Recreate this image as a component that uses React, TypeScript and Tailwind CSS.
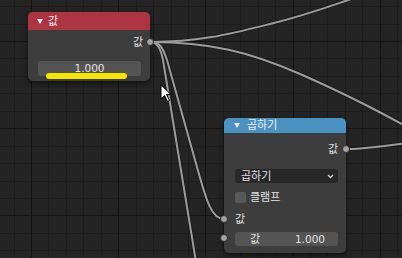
import React from "react";

const SP = 17.44;
const xs = Array.from({ length: 24 }, (_, n) => ({ v: Math.round(13.56 + SP * n), major: (n - 1) % 5 === 0 }));
const ys = Array.from({ length: 16 }, (_, n) => ({ v: Math.round(6.12 + SP * n), major: n % 5 === 2 }));

function Grid() {
  return (
    <svg className="absolute inset-0" width="402" height="258">
      <rect width="402" height="258" fill="#242424" />
      {xs.filter((l) => !l.major).map((l) => (
        <rect key={"x" + l.v} x={l.v} y={0} width={1} height={258} fill="#1c1c1c" />
      ))}
      {ys.filter((l) => !l.major).map((l) => (
        <rect key={"y" + l.v} x={0} y={l.v} width={402} height={1} fill="#1c1c1c" />
      ))}
      {xs.filter((l) => l.major).map((l) => (
        <rect key={"X" + l.v} x={l.v} y={0} width={1} height={258} fill="#141414" />
      ))}
      {ys.filter((l) => l.major).map((l) => (
        <rect key={"Y" + l.v} x={0} y={l.v} width={402} height={1} fill="#141414" />
      ))}
    </svg>
  );
}

const wires = [
  "M150,42 C200,42 230,34 270,24 S330,6 360,-4",
  "M150,42 C210,42 250,52 300,74 S380,112 420,134",
  "M150,42 C158,42 161,50 163,60 L196,262",
  "M150,42 C162,42 163,50 167,60 L195,160 C205,195 210,219 224,219",
  "M346,149 C370,149 385,145 410,143",
];

function Wires() {
  return (
    <svg className="absolute inset-0" width="402" height="258" fill="none">
      {wires.map((d, i) => (
        <path key={"o" + i} d={d} stroke="#141414" strokeOpacity="0.6" strokeWidth="3.6" />
      ))}
      {wires.map((d, i) => (
        <path key={"w" + i} d={d} stroke="#9c9c9c" strokeWidth="2" />
      ))}
    </svg>
  );
}

function Tri() {
  return (
    <svg width="6" height="5" viewBox="0 0 6 5">
      <path d="M0,0 L6,0 L3,5 Z" fill="#eaeaea" />
    </svg>
  );
}

function Socket({ cls }: { cls: string }) {
  return <div className={"absolute w-[8px] h-[8px] rounded-full bg-[#a3a3a3] border border-[#2b2b2b] " + cls} />;
}

export default function App() {
  const font = { fontFamily: '"DejaVu Sans", "Noto Sans CJK KR", sans-serif' };
  return (
    <div className="relative w-[402px] h-[258px] overflow-hidden bg-[#242424] text-[11px] text-[#e2e2e2]" style={font}>
      <Grid />
      <Wires />

      {/* Value node */}
      <div className="absolute left-[28px] top-[12px] w-[122px] rounded-[5px] bg-[#3d3d3d] shadow-[0_2px_5px_rgba(0,0,0,0.55)]">
        <div className="h-[18px] rounded-t-[5px] bg-[#ad3441] flex items-center pl-[9px] gap-[5px] text-[#eeeeee]">
          <Tri />
          <span className="leading-none">값</span>
        </div>
        <div className="pl-[10px] pr-[9px] pt-[3px] pb-[5px] flex flex-col">
          <div className="h-[18px] flex items-center justify-end mr-[-2px]">
            <span className="leading-none">값</span>
          </div>
          <div className="relative mt-[10px] h-[15px] rounded-[3px] bg-[#545454] flex items-center justify-center">
            <span className="leading-none text-[10.5px] text-[#e4e4e4]">1.000</span>
            <div className="absolute left-[8px] top-[12px] w-[81px] h-[6px] rounded-full bg-[#f5e500]" />
          </div>
        </div>
        <Socket cls="right-[-4px] top-[26px]" />
      </div>

      {/* Multiply node */}
      <div className="absolute left-[224px] top-[118px] w-[122px] rounded-[5px] bg-[#3d3d3d] shadow-[0_2px_5px_rgba(0,0,0,0.55)]">
        <div className="h-[15px] rounded-t-[5px] bg-[#4a92c2] flex items-center pl-[10px] gap-[7px] text-[#eeeeee]">
          <Tri />
          <span className="leading-none">곱하기</span>
        </div>
        <div className="pl-[11px] pr-[8px] pt-[7px] pb-[7px] flex flex-col">
          <div className="h-[18px] flex items-center justify-end">
            <span className="leading-none">값</span>
          </div>
          <div className="mt-[11px] h-[14px] rounded-[3px] bg-[#282828] flex items-center justify-between pl-[6px] pr-[4px]">
            <span className="leading-none">곱하기</span>
            <svg width="7" height="5" viewBox="0 0 7 5" fill="none">
              <path d="M1,1 L3.5,3.5 L6,1" stroke="#d8d8d8" strokeWidth="1.3" />
            </svg>
          </div>
          <div className="mt-[8px] h-[13px] flex items-center gap-[4px]">
            <div className="w-[11px] h-[11px] rounded-[2px] bg-[#595959]" />
            <span className="leading-none">클램프</span>
          </div>
          <div className="mt-[8px] h-[14px] flex items-center">
            <span className="leading-none">값</span>
          </div>
          <div className="mt-[6px] h-[14px] rounded-[3px] bg-[#545454] flex items-center justify-between pl-[15px] pr-[13px]">
            <span className="leading-none">값</span>
            <span className="leading-none text-[10.5px]">1.000</span>
          </div>
        </div>
        <Socket cls="right-[-4px] top-[27px]" />
        <Socket cls="left-[-4px] top-[97px]" />
        <Socket cls="left-[-4px] top-[116px]" />
      </div>

      {/* Cursor */}
      <svg className="absolute left-[160px] top-[84px]" width="13" height="19" viewBox="0 0 13 19">
        <path d="M1,1 L1,15 L4.5,11.5 L7.5,17.5 L9.5,16.5 L6.5,10.5 L11,10.5 Z" fill="#ffffff" stroke="#000000" strokeWidth="1" strokeLinejoin="round" />
      </svg>
    </div>
  );
}
